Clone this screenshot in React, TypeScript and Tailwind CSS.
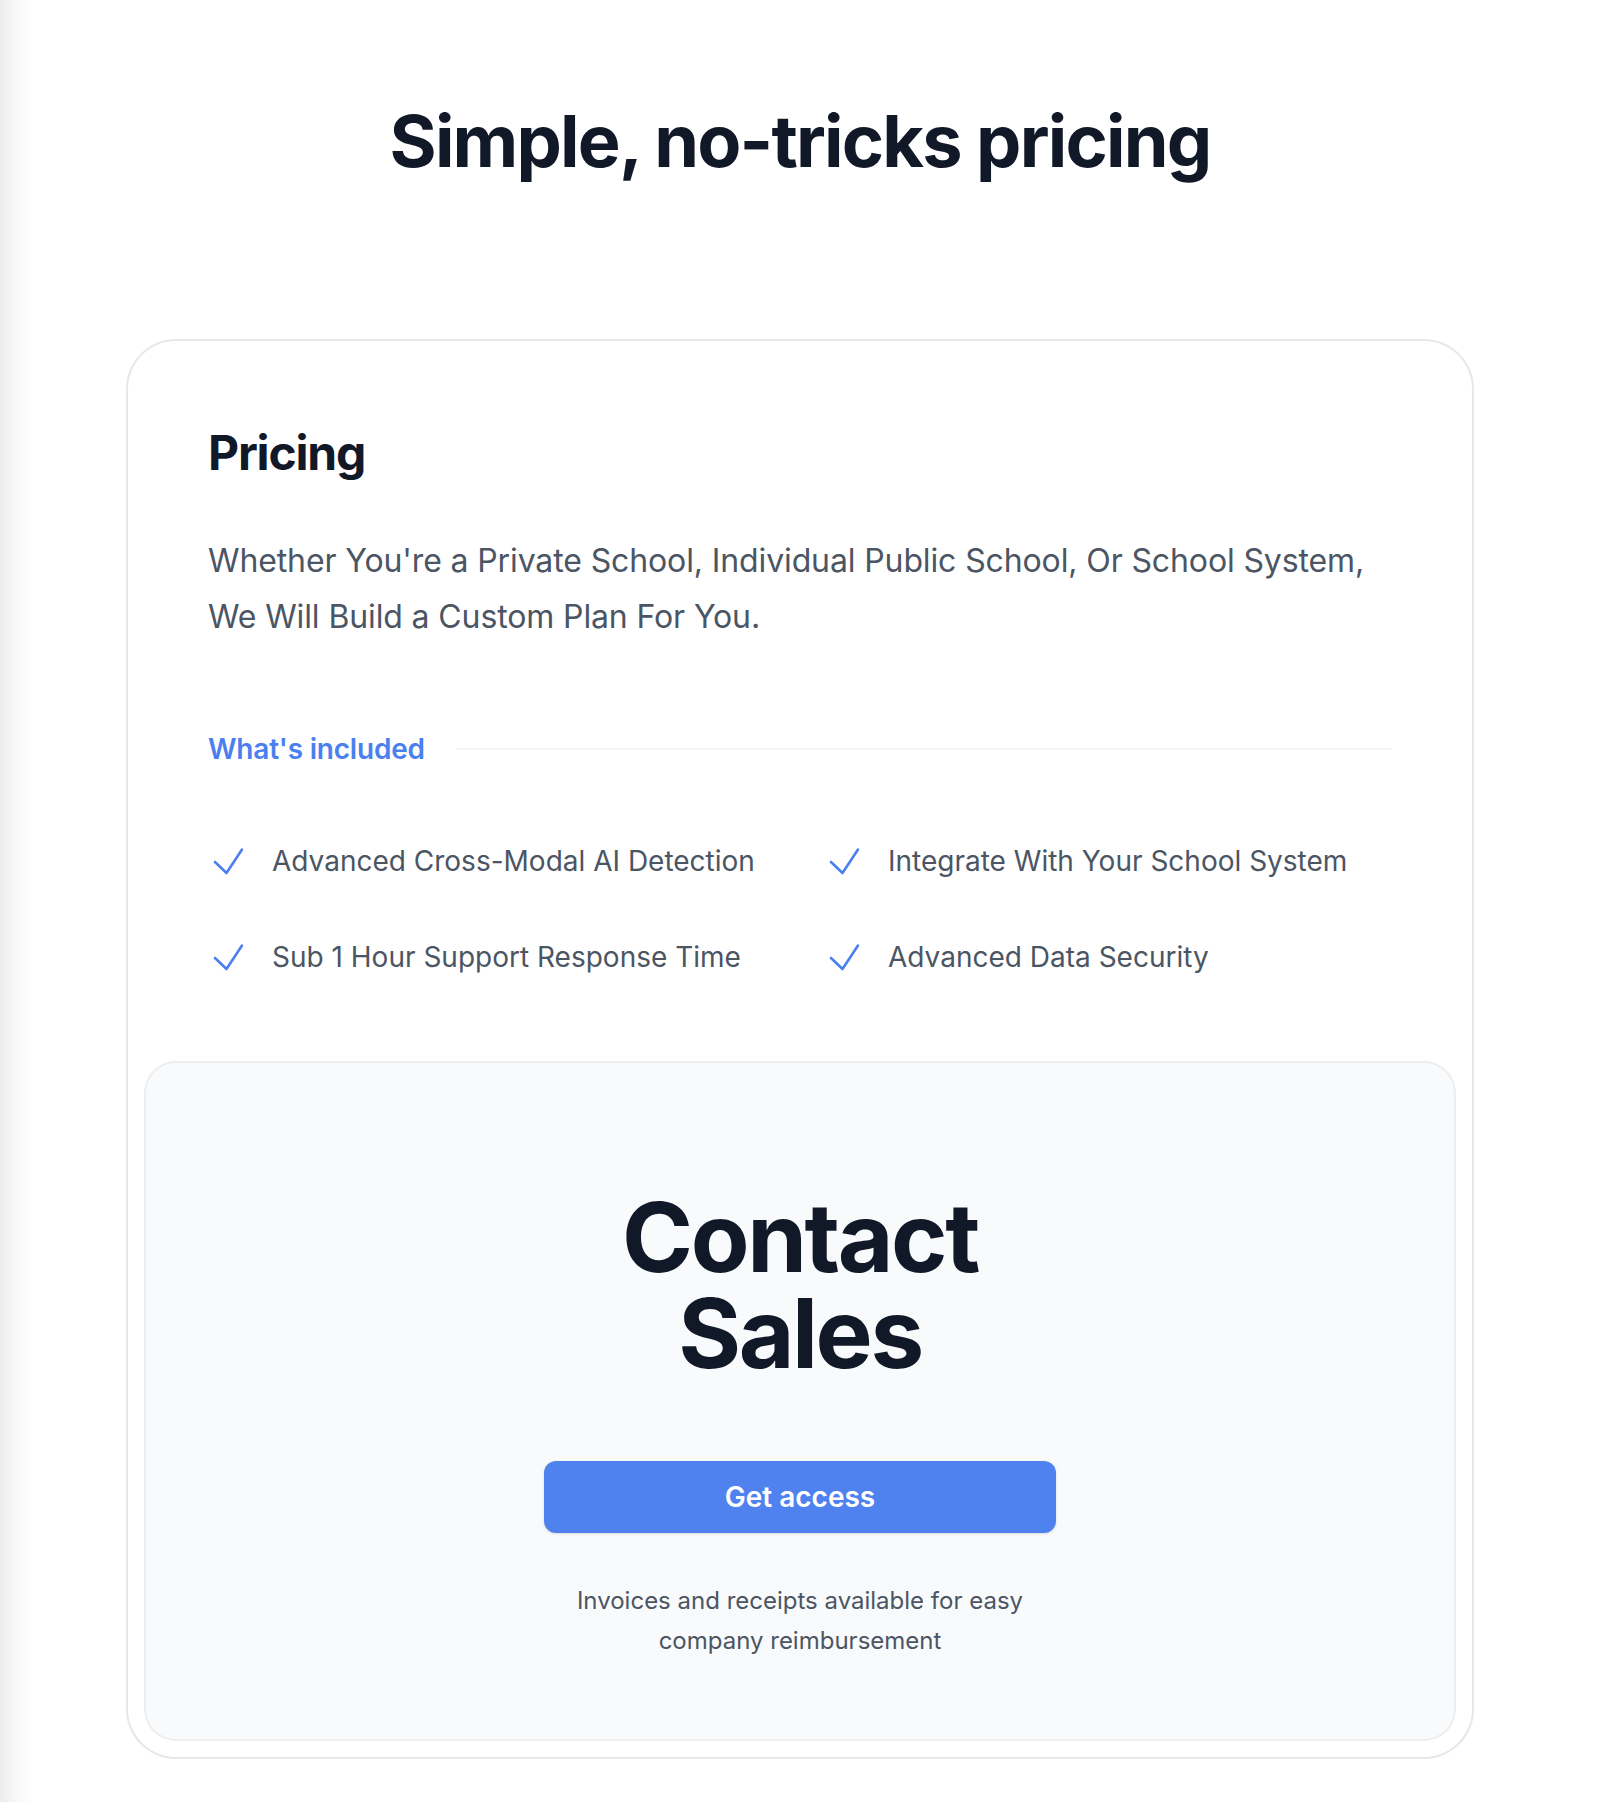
import React from "react";

const features = [
  "Advanced Cross-Modal AI Detection",
  "Integrate With Your School System",
  "Sub 1 Hour Support Response Time",
  "Advanced Data Security",
];

function Check() {
  return (
    <svg viewBox="0 0 40 48" className="h-[48px] w-[40px] flex-none" fill="none">
      <path
        d="M7 25 L18.5 36 L34 12.5"
        stroke="#4b7ff0"
        strokeWidth="2.6"
        strokeLinecap="round"
        strokeLinejoin="round"
      />
    </svg>
  );
}

export default function App() {
  return (
    <div
      className="min-h-[1802px] bg-[linear-gradient(to_right,#ececec_0px,#f6f6f6_14px,#ffffff_32px)] pr-[4px] pt-[101px] pb-[60px] text-[#111827]"
      style={{ fontFamily: "Inter, 'Noto Sans', sans-serif" }}
    >
      <h2 className="text-center text-[72px] font-bold leading-[80px] tracking-[-0.025em] text-[#111827]">
        Simple, no-tricks pricing
      </h2>

      <div className="mx-auto mt-[160px] w-[1344px] rounded-[48px] bg-white ring-2 ring-[#e5e7eb]">
        <div className="p-[80px]">
          <h3 className="text-[48px] font-bold leading-[64px] tracking-[-0.025em] text-[#111827]">
            Pricing
          </h3>
          <p className="mt-[48px] text-[32px] leading-[56px] tracking-[-0.12px] text-[#4b5563]">
            Whether You're a Private School, Individual Public School, Or School System, We Will Build a Custom Plan For You.
          </p>
          <div className="mt-[80px] flex items-center gap-x-[32px]">
            <h4 className="flex-none text-[28px] font-semibold leading-[48px] tracking-[-0.2px] text-[#4b7ff0]">
              What's included
            </h4>
            <div className="h-[2px] flex-auto bg-[#f3f4f6]" />
          </div>
          <ul className="mt-[64px] grid grid-cols-2 gap-[48px] text-[28px] leading-[48px] text-[#4b5563]">
            {features.map((f) => (
              <li key={f} className="flex gap-x-[24px]">
                <Check />
                {f}
              </li>
            ))}
          </ul>
        </div>
        <div className="-mt-[16px] p-[16px]">
          <div className="rounded-[32px] bg-[#f9fafb] py-[80px] text-center ring-2 ring-inset ring-[#111827]/5">
            <div className="mx-auto w-[640px] px-[64px]">
              <p className="mt-[48px] flex items-baseline justify-center">
                <span className="text-[96px] font-bold leading-[96px] tracking-[-0.025em] text-[#111827]">
                  Contact Sales
                </span>
              </p>
              <a
                href="#"
                className="mt-[80px] block w-full rounded-[12px] bg-[#4f82ee] px-[24px] py-[16px] text-center text-[28px] font-semibold leading-[40px] text-white shadow-sm"
              >
                Get access
              </a>
              <p className="mt-[48px] text-[24px] leading-[40px] text-[#4b5563]">
                Invoices and receipts available for easy company reimbursement
              </p>
            </div>
          </div>
        </div>
      </div>
    </div>
  );
}
